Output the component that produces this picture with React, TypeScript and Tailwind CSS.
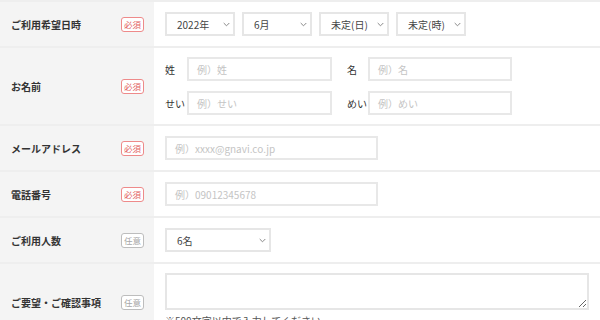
import React from "react";

const font = { fontFamily: '"Noto Sans CJK JP", "Noto Sans", sans-serif' };

function Badge({ required }: { required: boolean }) {
  return required ? (
    <span className="flex h-[15px] w-[23px] items-center justify-center rounded-[3px] border border-[#ee8a8a] bg-white text-[8.5px] leading-none text-[#e26262]">
      必須
    </span>
  ) : (
    <span className="flex h-[15px] w-[23px] items-center justify-center rounded-[3px] border border-[#bdbdbd] bg-white text-[8.5px] leading-none text-[#a8a8a8]">
      任意
    </span>
  );
}

function Chevron() {
  return (
    <svg width="7" height="5" viewBox="0 0 7 5" className="shrink-0">
      <path d="M0.7 1 L3.5 3.8 L6.3 1" fill="none" stroke="#888" strokeWidth="1" />
    </svg>
  );
}

function Select({ label, w }: { label: string; w: string }) {
  return (
    <div className={`flex h-[24px] ${w} items-center justify-between border-2 border-[#e6e6e6] bg-white pl-[10px] pr-[3px] text-[10px] text-[#444]`}>
      <span>{label}</span>
      <Chevron />
    </div>
  );
}

function Input({ ph, w }: { ph: string; w: string }) {
  return (
    <div className={`flex h-[24px] ${w} items-center border-2 border-[#e8e8e8] bg-white pl-[8px] text-[10px] text-[#c4c4c4]`}>
      {ph}
    </div>
  );
}

function Row({
  label,
  required,
  h,
  children,
}: {
  label: string;
  required: boolean;
  h: string;
  children: React.ReactNode;
}) {
  return (
    <div className={`flex ${h} border-b-2 border-[#eeeeee]`}>
      <div className="flex w-[154px] shrink-0 items-center justify-between bg-[#f4f4f4] pl-[11px] pr-[10px]">
        <span className="text-[10px] font-bold text-[#333]">{label}</span>
        <Badge required={required} />
      </div>
      <div className="flex flex-1 items-center bg-white px-[11px]">{children}</div>
    </div>
  );
}

export default function App() {
  return (
    <div className="h-[320px] w-[600px] overflow-hidden bg-white" style={font}>
      <div className="border-t-2 border-[#eeeeee]">
        <Row label="ご利用希望日時" required h="h-[46px]">
          <div className="flex gap-[7px]">
            <Select label="2022年" w="w-[70px]" />
            <Select label="6月" w="w-[70px]" />
            <Select label="未定(日)" w="w-[70px]" />
            <Select label="未定(時)" w="w-[70px]" />
          </div>
        </Row>
        <Row label="お名前" required h="h-[78px]">
          <div className="flex flex-col gap-[10px] text-[10px] text-[#333]">
            <div className="flex items-center">
              <span className="w-[22px]">姓</span>
              <Input ph="例）姓" w="w-[145px]" />
              <span className="ml-[15px] w-[21px]">名</span>
              <Input ph="例）名" w="w-[144px]" />
            </div>
            <div className="flex items-center">
              <span className="w-[22px]">せい</span>
              <Input ph="例）せい" w="w-[145px]" />
              <span className="ml-[15px] w-[21px]">めい</span>
              <Input ph="例）めい" w="w-[144px]" />
            </div>
          </div>
        </Row>
        <Row label="メールアドレス" required h="h-[46px]">
          <Input ph="例）xxxx@gnavi.co.jp" w="w-[213px]" />
        </Row>
        <Row label="電話番号" required h="h-[46px]">
          <Input ph="例）09012345678" w="w-[213px]" />
        </Row>
        <Row label="ご利用人数" required={false} h="h-[46px]">
          <Select label="6名" w="w-[106px]" />
        </Row>
        <div className="flex h-[80px]">
          <div className="flex w-[154px] shrink-0 items-center justify-between bg-[#f4f4f4] pb-[4px] pl-[11px] pr-[10px]">
            <span className="text-[10px] font-bold text-[#333]">ご要望・ご確認事項</span>
            <Badge required={false} />
          </div>
          <div className="flex flex-1 flex-col bg-white px-[11px] pt-[9px]">
            <textarea className="h-[37px] w-full resize-y border-2 border-[#e6e6e6] bg-white outline-none" />
            <span className="mt-[3px] text-[10px] text-[#555]">※500文字以内で入力してください</span>
          </div>
        </div>
      </div>
    </div>
  );
}
